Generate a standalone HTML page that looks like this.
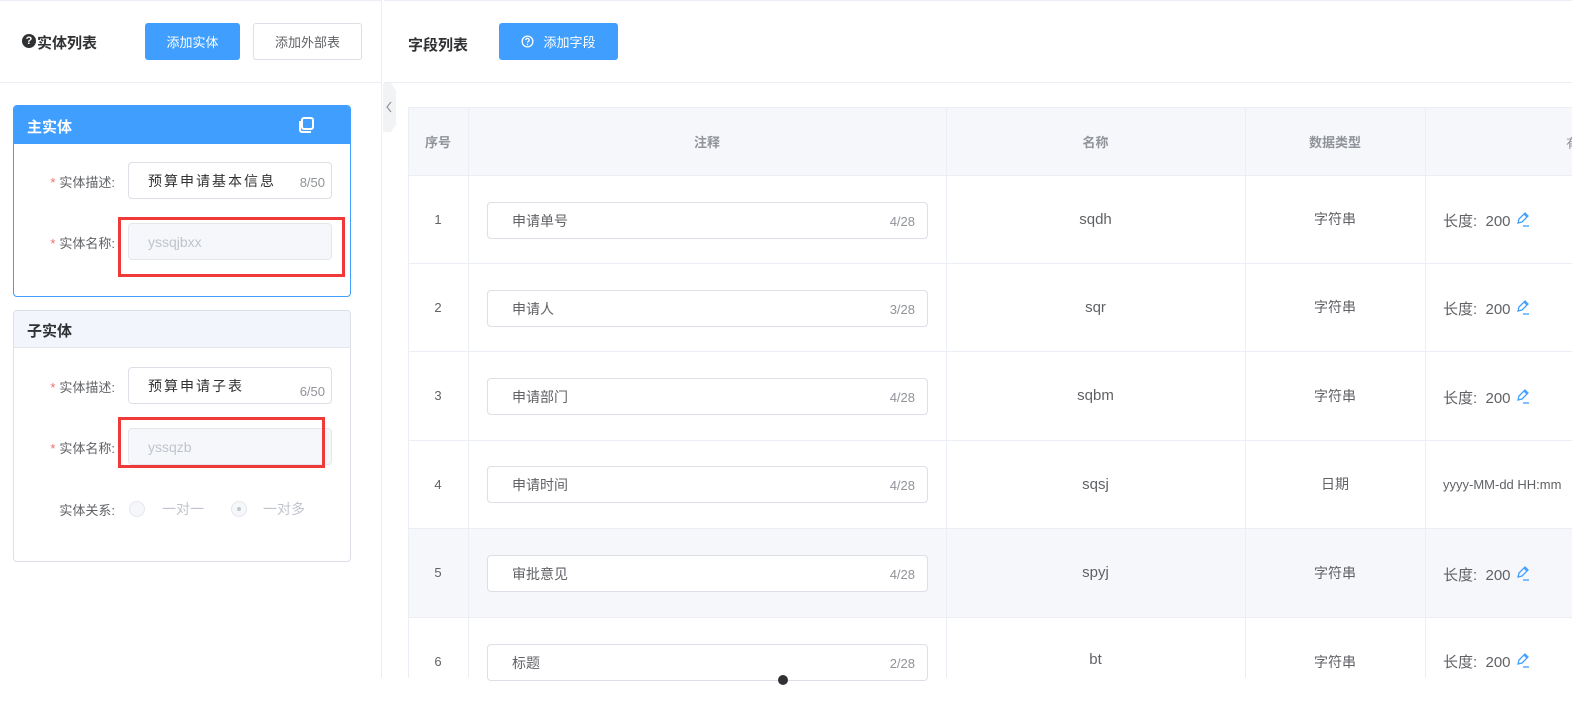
<!DOCTYPE html>
<html><head><meta charset="utf-8"><style>
*{box-sizing:border-box;margin:0;padding:0}
body{width:1572px;height:678px;overflow:hidden;background:#fff;font-family:"Liberation Sans","Noto Sans CJK SC",sans-serif;color:#606266;position:relative}
.abs{position:absolute}
.btn{position:absolute;border-radius:3px;font-size:13px;display:flex;align-items:center;justify-content:center}
.inp{position:absolute;border:1px solid #dcdfe6;border-radius:4px;background:#fff;font-size:14px;display:flex;align-items:center}
.lbl{position:absolute;font-size:13px;color:#606266;text-align:right;width:100px}
.lbl b{color:#f56c6c;font-weight:normal;margin-right:4px}
.red{position:absolute;border:3px solid #f03a3a}
.hline{position:absolute;height:1px;background:#ebeef5}
.vline{position:absolute;width:1px;background:#ebeef5}
.cell{position:absolute;font-size:14px;color:#606266;display:flex;align-items:center;justify-content:center}
.pen{display:inline-block;vertical-align:-2px;margin-left:4px}
</style></head><body>
<!-- left panel -->
<div class="abs" style="left:0;top:0;width:382px;height:678px;border-right:1px solid #ebeef5;border-top:1px solid #ebeef5"></div>
<div class="hline" style="left:0;top:82px;width:382px"></div>
<div class="abs" style="left:22px;top:34px;width:14px;height:14px;border-radius:50%;background:#303133;color:#fff;font-size:11px;font-weight:bold;text-align:center;line-height:14px">?</div>
<div class="abs" style="left:37px;top:32px;font-size:15px;font-weight:bold;color:#303133">实体列表</div>
<div class="btn" style="left:145px;top:23px;width:95px;height:37px;background:#409eff;color:#fff">添加实体</div>
<div class="btn" style="left:253px;top:23px;width:109px;height:37px;border:1px solid #dcdfe6;color:#606266">添加外部表</div>

<!-- main entity card -->
<div class="abs" style="left:13px;top:105px;width:338px;height:192px;border:1px solid #409eff;border-radius:4px;overflow:hidden">
 <div style="height:38px;background:#409eff;color:#fff;font-weight:bold;font-size:15px;padding:10px 0 0 13px">主实体</div>
 <svg class="abs" style="left:283px;top:11px" width="18" height="17" viewBox="0 0 18 17"><rect x="5" y="1" width="11" height="11" rx="2" fill="none" stroke="#fff" stroke-width="2"/><path d="M3 4v9a2 2 0 0 0 2 2h9" fill="none" stroke="#fff" stroke-width="2"/></svg>
</div>
<div class="lbl" style="left:15px;top:172px"><b>*</b>实体描述:</div>
<div class="inp" style="left:128px;top:162px;width:204px;height:37px;padding-left:19px;letter-spacing:2px;color:#303133">预算申请基本信息<span style="position:absolute;right:6px;top:12px;font-size:13px;color:#909399;letter-spacing:0">8/50</span></div>
<div class="lbl" style="left:15px;top:233px"><b>*</b>实体名称:</div>
<div class="inp" style="left:128px;top:223px;width:204px;height:37px;padding-left:19px;background:#f5f7fa;border-color:#e4e7ed;color:#c0c4cc">yssqjbxx</div>
<div class="red" style="left:118px;top:217px;width:227px;height:60px"></div>

<!-- sub entity card -->
<div class="abs" style="left:13px;top:310px;width:338px;height:252px;border:1px solid #dcdfe6;border-radius:4px;overflow:hidden">
 <div style="height:37px;background:#f2f5fc;border-bottom:1px solid #e4e7ed;color:#303133;font-weight:bold;font-size:15px;padding:9px 0 0 13px">子实体</div>
</div>
<div class="lbl" style="left:15px;top:377px"><b>*</b>实体描述:</div>
<div class="inp" style="left:128px;top:367px;width:204px;height:37px;padding-left:19px;letter-spacing:2px;color:#303133;align-items:flex-start;padding-top:8px">预算申请子表<span style="position:absolute;right:6px;top:16px;font-size:13px;color:#909399;letter-spacing:0">6/50</span></div>
<div class="lbl" style="left:15px;top:438px"><b>*</b>实体名称:</div>
<div class="inp" style="left:128px;top:428px;width:204px;height:37px;padding-left:19px;background:#f5f7fa;border-color:#e4e7ed;color:#c0c4cc">yssqzb</div>
<div class="red" style="left:118px;top:417px;width:207px;height:51px"></div>
<div class="lbl" style="left:15px;top:500px">实体关系:</div>
<div class="abs" style="left:129px;top:501px;width:16px;height:16px;border:1px solid #e4e7ed;border-radius:50%;background:#f5f7fa"></div>
<div class="abs" style="left:162px;top:499px;font-size:14px;color:#c0c4cc">一对一</div>
<div class="abs" style="left:231px;top:501px;width:16px;height:16px;border:1px solid #e4e7ed;border-radius:50%;background:#f5f7fa"><div style="width:4px;height:4px;background:#c0c4cc;border-radius:50%;margin:5px"></div></div>
<div class="abs" style="left:263px;top:499px;font-size:14px;color:#c0c4cc">一对多</div>

<!-- collapse tab -->
<div class="abs" style="left:383px;top:83px;width:13px;height:49px;background:#f2f3f5;clip-path:polygon(0 0,60% 0,100% 15%,100% 85%,60% 100%,0 100%)"></div>
<svg class="abs" style="left:384px;top:100px" width="10" height="14"><path d="M7 2L3 7l4 5" fill="none" stroke="#909399" stroke-width="1.2"/></svg>

<!-- right header -->
<div class="hline" style="left:384px;top:0;width:1188px"></div>
<div class="hline" style="left:384px;top:82px;width:1188px"></div>
<div class="abs" style="left:408px;top:34px;font-size:15px;font-weight:bold;color:#303133">字段列表</div>
<div class="btn" style="left:499px;top:23px;width:119px;height:37px;background:#409eff;color:#fff">
<svg width="13" height="13" viewBox="0 0 14 14" style="margin-right:9px"><circle cx="7" cy="7" r="5.8" fill="none" stroke="#fff" stroke-width="1.4"/><path d="M5.2 5.5a1.8 1.8 0 1 1 2.5 1.6c-.5.3-.7.6-.7 1.2" fill="none" stroke="#fff" stroke-width="1.3"/><circle cx="7" cy="10.2" r=".8" fill="#fff"/></svg>添加字段</div>

<!-- table -->
<div class="abs" style="left:408px;top:107px;width:1164px;height:68px;background:#f5f7fa;border-top:1px solid #ebeef5"></div>
<div class="abs" style="left:408px;top:528px;width:1164px;height:89px;background:#f5f7fa"></div>
<div class="vline" style="left:408px;top:107px;height:571px"></div>
<div class="vline" style="left:468px;top:107px;height:571px"></div>
<div class="vline" style="left:946px;top:107px;height:571px"></div>
<div class="vline" style="left:1245px;top:107px;height:571px"></div>
<div class="vline" style="left:1425px;top:107px;height:571px"></div>
<div class="hline" style="left:408px;top:175px;width:1164px"></div>
<div class="hline" style="left:408px;top:263px;width:1164px"></div>
<div class="hline" style="left:408px;top:351px;width:1164px"></div>
<div class="hline" style="left:408px;top:440px;width:1164px"></div>
<div class="hline" style="left:408px;top:528px;width:1164px"></div>
<div class="hline" style="left:408px;top:617px;width:1164px"></div>
<div class="cell" style="left:408px;top:107px;width:60px;height:68px;font-size:13px;color:#909399;font-weight:bold">序号</div>
<div class="cell" style="left:468px;top:107px;width:478px;height:68px;font-size:13px;color:#909399;font-weight:bold">注释</div>
<div class="cell" style="left:946px;top:107px;width:299px;height:68px;font-size:13px;color:#909399;font-weight:bold">名称</div>
<div class="cell" style="left:1245px;top:107px;width:180px;height:68px;font-size:13px;color:#909399;font-weight:bold">数据类型</div>
<div class="abs" style="left:1566px;top:133px;font-size:13px;color:#909399">有</div>

<!-- rows -->
<div class="cell" style="left:408px;top:175px;width:60px;height:88px;font-size:13px">1</div>
<div class="inp" style="left:487px;top:202px;width:441px;height:37px;padding-left:24px;color:#606266">申请单号<span style="position:absolute;right:12px;top:11px;font-size:13px;color:#909399">4/28</span></div>
<div class="cell" style="left:946px;top:175px;width:299px;height:88px;font-size:15px">sqdh</div>
<div class="cell" style="left:1245px;top:175px;width:180px;height:88px">字符串</div>
<div class="abs" style="left:1443px;top:210px;font-size:15px">长度:&nbsp; 200<svg class="pen" width="16" height="17" viewBox="0 0 16 17"><path d="M3 12l1-4 6-6 3 3-6 6z M9 3l3 3" fill="none" stroke="#409eff" stroke-width="1.3"/><path d="M8 15h6" stroke="#409eff" stroke-width="1.3"/></svg></div>

<div class="cell" style="left:408px;top:263px;width:60px;height:88px;font-size:13px">2</div>
<div class="inp" style="left:487px;top:290px;width:441px;height:37px;padding-left:24px">申请人<span style="position:absolute;right:12px;top:11px;font-size:13px;color:#909399">3/28</span></div>
<div class="cell" style="left:946px;top:263px;width:299px;height:88px;font-size:15px">sqr</div>
<div class="cell" style="left:1245px;top:263px;width:180px;height:88px">字符串</div>
<div class="abs" style="left:1443px;top:298px;font-size:15px">长度:&nbsp; 200<svg class="pen" width="16" height="17" viewBox="0 0 16 17"><path d="M3 12l1-4 6-6 3 3-6 6z M9 3l3 3" fill="none" stroke="#409eff" stroke-width="1.3"/><path d="M8 15h6" stroke="#409eff" stroke-width="1.3"/></svg></div>

<div class="cell" style="left:408px;top:351px;width:60px;height:89px;font-size:13px">3</div>
<div class="inp" style="left:487px;top:378px;width:441px;height:37px;padding-left:24px">申请部门<span style="position:absolute;right:12px;top:11px;font-size:13px;color:#909399">4/28</span></div>
<div class="cell" style="left:946px;top:351px;width:299px;height:89px;font-size:15px">sqbm</div>
<div class="cell" style="left:1245px;top:351px;width:180px;height:89px">字符串</div>
<div class="abs" style="left:1443px;top:387px;font-size:15px">长度:&nbsp; 200<svg class="pen" width="16" height="17" viewBox="0 0 16 17"><path d="M3 12l1-4 6-6 3 3-6 6z M9 3l3 3" fill="none" stroke="#409eff" stroke-width="1.3"/><path d="M8 15h6" stroke="#409eff" stroke-width="1.3"/></svg></div>

<div class="cell" style="left:408px;top:440px;width:60px;height:88px;font-size:13px">4</div>
<div class="inp" style="left:487px;top:466px;width:441px;height:37px;padding-left:24px">申请时间<span style="position:absolute;right:12px;top:11px;font-size:13px;color:#909399">4/28</span></div>
<div class="cell" style="left:946px;top:440px;width:299px;height:88px;font-size:15px">sqsj</div>
<div class="cell" style="left:1245px;top:440px;width:180px;height:88px">日期</div>
<div class="abs" style="left:1443px;top:477px;font-size:13px;white-space:nowrap">yyyy-MM-dd HH:mm</div>

<div class="cell" style="left:408px;top:528px;width:60px;height:89px;font-size:13px">5</div>
<div class="inp" style="left:487px;top:555px;width:441px;height:37px;padding-left:24px">审批意见<span style="position:absolute;right:12px;top:11px;font-size:13px;color:#909399">4/28</span></div>
<div class="cell" style="left:946px;top:528px;width:299px;height:89px;font-size:15px">spyj</div>
<div class="cell" style="left:1245px;top:528px;width:180px;height:89px">字符串</div>
<div class="abs" style="left:1443px;top:564px;font-size:15px">长度:&nbsp; 200<svg class="pen" width="16" height="17" viewBox="0 0 16 17"><path d="M3 12l1-4 6-6 3 3-6 6z M9 3l3 3" fill="none" stroke="#409eff" stroke-width="1.3"/><path d="M8 15h6" stroke="#409eff" stroke-width="1.3"/></svg></div>

<div class="cell" style="left:408px;top:617px;width:60px;height:88px;font-size:13px">6</div>
<div class="inp" style="left:487px;top:644px;width:441px;height:37px;padding-left:24px;align-items:flex-start;padding-top:8px">标题<span style="position:absolute;right:12px;top:11px;font-size:13px;color:#909399">2/28</span></div>
<div class="abs" style="left:946px;top:651px;width:299px;text-align:center;font-size:15px">bt</div>
<div class="abs" style="left:1245px;top:652px;width:180px;text-align:center;font-size:14px">字符串</div>
<div class="abs" style="left:1443px;top:651px;font-size:15px">长度:&nbsp; 200<svg class="pen" width="16" height="17" viewBox="0 0 16 17"><path d="M3 12l1-4 6-6 3 3-6 6z M9 3l3 3" fill="none" stroke="#409eff" stroke-width="1.3"/><path d="M8 15h6" stroke="#409eff" stroke-width="1.3"/></svg></div>
<div class="abs" style="left:778px;top:675px;width:10px;height:10px;border-radius:50%;background:#303133"></div>
</body></html>
